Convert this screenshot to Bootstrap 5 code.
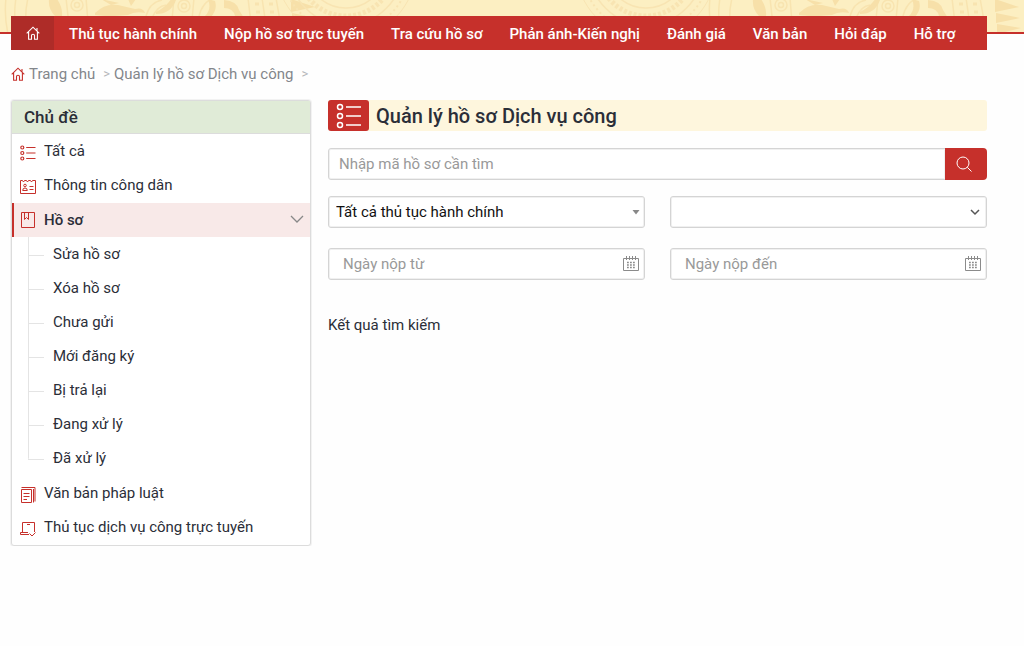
<!DOCTYPE html>
<html lang="vi">
<head>
<meta charset="utf-8">
<meta name="viewport" content="width=device-width, initial-scale=1">
<title>Quản lý hồ sơ Dịch vụ công</title>
<link href="https://cdn.jsdelivr.net/npm/bootstrap@5.3.0/dist/css/bootstrap.min.css" rel="stylesheet">
<style>
  :root { --brand: #c6302b; --line: #dcdcdc; --ink: #2b2e38; }
  body { font-family: Roboto, "Liberation Sans", sans-serif; font-size: 15px; line-height: 20px; color: var(--ink); background: #fefefe; }
  a { color: inherit; text-decoration: none; }
  svg { display: block; flex: none; }
  .page-gutter { padding-left: 11px; padding-right: 37px; }

  .banner-art { height: 34px; background: #fcefc2; border-bottom: 2px solid var(--brand); overflow: hidden; z-index: -1; }
  .banner-art svg { width: 100%; height: 32px; }
  .site-header { padding-top: 16px; z-index: 0; }
  .main-nav { background: var(--brand); color: #fff; min-height: 34px; font-weight: 500; }
  .home-link { background: #ae2c28; width: 43px; }
  .nav-items { padding: 8px 15px 6px; column-gap: 27px; }

  .crumbs { color: #83868b; padding-top: 14px; padding-bottom: 16px; }
  .crumb-sep { color: #b5b7ba; font-size: 13px; }

  .layout { display: grid; grid-template-columns: 300px minmax(0, 1fr); column-gap: 17px; align-items: start; }
  .topics { border: 1px solid var(--line); border-radius: 3px; box-shadow: 0 0 0 1px #f2f2f2; background: #fff; padding-bottom: 1px; }
  .topics h2 { margin: 0; padding: 6px 12px 5px; font-size: 17px; line-height: 21px; font-weight: 500; background: #e0ebd7; border-bottom: 1px solid var(--line); }
  .topic { height: 34px; padding-left: 8px; padding-right: 6px; column-gap: 8px; color: var(--ink); }
  .topic-open { background: #f8e9e8; border-left: 2px solid var(--brand); padding-left: 6px; font-weight: 500; margin-top: 1px; }
  .topic-icon { stroke: var(--brand); fill: none; }
  .subtopics { margin: 0 0 1px 16px; }
  .subtopics li { display: flex; align-items: center; height: 34px; column-gap: 9px;
    background: linear-gradient(#e4e4e4, #e4e4e4) 0 0 / 1px 100% no-repeat; }
  .subtopics li:last-child { background-size: 1px 52%; }
  .subtopics li::before { content: ""; width: 16px; height: 1px; background: #e4e4e4; margin-top: 2px; }
  .subtopics a { padding-bottom: 1px; }

  .page-title { background: #fef6dd; border-radius: 3px; column-gap: 7px; margin: 0 0 17px; font-size: 20px; line-height: 29px; padding-top: 0; font-weight: 500; }
  .page-title-text { padding-top: 2px; }
  .title-icon { width: 41px; height: 31px; background: var(--brand); border-radius: 3px; }
  .field { height: 32px; font-size: 15px; line-height: 20px; border: 1px solid #d4d4d4; border-radius: 3px; box-shadow: inset 0 0 0 1px #f0f0f0; padding: 5px 10px; background-color: #fff; color: #111; }
  .field::placeholder { color: #999; opacity: 1; }
  .search-row { margin-bottom: 16px; }
  .search-btn { width: 42px; height: 32px; padding: 0; background: var(--brand); border: 0; border-radius: 0 4px 4px 0; }
  .search-btn:hover { background: #ae2c28; }
  .filters { display: grid; grid-template-columns: 1fr 1fr; gap: 20px 25px; }
  .pick { padding: 5px 20px 5px 7px; background-size: 10px 10px; background-position: right 6px center; }
  .pick-solid { background-size: 8px 8px; background-position: right 4px center;
    background-image: url("data:image/svg+xml,%3Csvg xmlns='http://www.w3.org/2000/svg' viewBox='0 0 8 8'%3E%3Cpath d='M0.5 2h7L4 6.5z' fill='%23888'/%3E%3C/svg%3E"); }
  .pick-line { background-image: url("data:image/svg+xml,%3Csvg xmlns='http://www.w3.org/2000/svg' viewBox='0 0 10 10'%3E%3Cpath d='M1 3l4 4 4-4' fill='none' stroke='%23555' stroke-width='1.5'/%3E%3C/svg%3E"); }
  .date { padding-left: 14px; padding-right: 30px; }
  .date-icon { top: 8px; right: 6px; }
  .results { margin: 35px 0 0; font-size: 15px; line-height: 20px; font-weight: 400; }
</style>
</head>
<body>

<svg width="0" height="0" class="position-absolute" aria-hidden="true">
  <symbol id="i-home" viewBox="0 0 14 14"><path d="M.7 7.4L7 1.2l6.3 6.2M2.6 6v7.2h2.9V9.6Q5.500 8.200 7 8.200Q8.500 8.200 8.500 9.600V13.200h2.900V6M11 4.800V2" fill="none" stroke="currentColor" stroke-width="1.1"/></symbol>
  <symbol id="i-list" viewBox="0 0 16 16"><g fill="none" stroke="currentColor" stroke-width="1.200"><circle cx="2.300" cy="2.500" r="1.500"/><circle cx="2.300" cy="8" r="1.500"/><circle cx="2.300" cy="13.500" r="1.500"/><path d="M6.200 2.500H15.500M6.200 8H15.500M6.200 13.500H15.500"/></g></symbol>
  <symbol id="i-cal" viewBox="0 0 16 16"><g fill="none" stroke="#8b8b8b"><path d="M.5 2.500h15v12H.5zM3.500 0v4M6.500 0v4M9.500 0v4M12.500 0v4"/><path d="M4 6.500h9M4 9h9M4 11.500h9" stroke-width="1.400" stroke-dasharray="1.800 1.200"/></g></symbol>
  <!-- Bronze-drum bands: birds, warriors and the star rim -->
  <symbol id="drum" viewBox="0 0 340 32">
    <g fill="none" stroke="#f8e4b0" stroke-width="1.500">
      <path d="M6-2q-2 18 2 36M16-2q-3 18 1 36M28-2q-4 16-1 36M66-2l4 36M86-2l3 36M174-2l-2 22M194-2l-2 22M248-2l4 34M262-2l5 34M276-2l6 34"/>
      <circle cx="77" cy="5" r="6"/><circle cx="77" cy="5" r="2.500"/><circle cx="79" cy="24" r="6"/><circle cx="79" cy="24" r="2.500"/>
      <circle cx="184" cy="6" r="6"/><circle cx="184" cy="6" r="2.500"/><path d="M146 16q4-14 16-16M152 18q5-12 14-13M199 16q3-12 12-17"/>
      <path d="M255 4h4M256 12h4M257 20h4M258 28h4M269 4h4M270 12h4M271 20h4M272 28h4" stroke-width="3"/>
    </g>
    <g fill="#f7e0a9">
      <path d="M49-1h8q6 9 5 17l-4 16h-5l2-16q-7-7-6-17zM95 13q10-10 23-8l17 4q8-2 10 4-10-2-17 2l-13 1-8 6-2-6-10-1zM101-1l18 4-8 2zM128-1h8l-5 7zM156 12q10-5 16-14l4 2q-5 14-20 14zM208-1l7 2q3 9-5 17l-5-2q7-7 3-17zM224 0q13 1 15 10l5 8-9-2q-2-8-11-8z"/>
      <path d="M291-1l24 8-24 5zM292 13l24 5-24 5zM293 24l24 4-24 6z"/>
    </g>
  </symbol>
</svg>

<header class="site-header page-gutter position-relative">
  <div class="banner-art position-absolute top-0 start-0 w-100" aria-hidden="true">
    <svg viewBox="0 0 1024 32" preserveAspectRatio="xMidYMid slice">
      <use href="#drum" x="0" width="340" height="32"/>
      <g fill="none" stroke="#f8e4b2">
        <circle cx="346" cy="-32" r="64" stroke-width="2" stroke-dasharray="2 3"/>
        <circle cx="346" cy="-32" r="70" stroke-width="1"/><circle cx="346" cy="-32" r="57" stroke-width="1.500"/><circle cx="346" cy="-32" r="48" stroke-width="5" stroke-dasharray="3 2"/><circle cx="346" cy="-32" r="40" stroke-width="1.500"/>
        <circle cx="646" cy="-32" r="64" stroke-width="2" stroke-dasharray="2 3"/>
        <circle cx="646" cy="-32" r="70" stroke-width="1"/><circle cx="646" cy="-32" r="57" stroke-width="1.500"/><circle cx="646" cy="-32" r="48" stroke-width="5" stroke-dasharray="3 2"/><circle cx="646" cy="-32" r="40" stroke-width="1.500"/>
      </g>
      <use href="#drum" x="704" width="340" height="32"/>
    </svg>
  </div>
  <nav class="main-nav d-flex align-items-stretch" aria-label="Chính">
    <a href="#" class="home-link d-flex align-items-center justify-content-center flex-shrink-0" aria-label="Trang chủ"><svg width="14" height="14"><use href="#i-home"/></svg></a>
    <div class="nav-items d-flex flex-wrap">
      <a href="#">Thủ tục hành chính</a>
      <a href="#">Nộp hồ sơ trực tuyến</a>
      <a href="#">Tra cứu hồ sơ</a>
      <a href="#">Phản ánh-Kiến nghị</a>
      <a href="#">Đánh giá</a>
      <a href="#">Văn bản</a>
      <a href="#">Hỏi đáp</a>
      <a href="#">Hỗ trợ</a>
    </div>
  </nav>
</header>

<div class="page-gutter">
  <nav class="crumbs d-flex align-items-center" aria-label="Đường dẫn">
    <a href="#" class="d-flex align-items-center gap-1"><svg width="14" height="14" color="#c6302b"><use href="#i-home"/></svg>Trang chủ</a>
    <span class="crumb-sep ms-2 me-1">&gt;</span>
    <a href="#">Quản lý hồ sơ Dịch vụ công</a>
    <span class="crumb-sep ms-2">&gt;</span>
  </nav>

  <div class="layout">
    <aside class="topics">
      <h2>Chủ đề</h2>
      <a href="#" class="topic d-flex align-items-center"><svg class="mt-1" width="16" height="16" color="#c6302b"><use href="#i-list"/></svg>Tất cả</a>
      <a href="#" class="topic d-flex align-items-center">
        <svg class="topic-icon mt-1" width="16" height="16" viewBox="0 0 16 16"><path d="M.5 1.500h2l1 1.500 1-1.500h2l1 1.500 1-1.500h2l1 1.500 1-1.500h3v13H.5z"/><circle cx="5" cy="6.500" r="1.300"/><path d="M2.700 11.500q0-2.500 2.300-2.500t2.300 2.500zM9.500 7.500h4M9.500 10.500h4"/></svg>Thông tin công dân</a>
      <a href="#" class="topic topic-open d-flex align-items-center">
        <svg class="topic-icon" width="16" height="16" viewBox="0 0 16 16"><path d="M1.500 .5h13v15h-13zM4.500 .5v7l2-2 2 2v-7"/></svg>Hồ sơ
        <svg class="ms-auto" width="14" height="14" viewBox="0 0 14 14" fill="none" stroke="#888" stroke-width="1.300"><path d="M1 3l6 6 6-6"/></svg></a>
      <ul class="subtopics list-unstyled">
        <li><a href="#">Sửa hồ sơ</a></li>
        <li><a href="#">Xóa hồ sơ</a></li>
        <li><a href="#">Chưa gửi</a></li>
        <li><a href="#">Mới đăng ký</a></li>
        <li><a href="#">Bị trả lại</a></li>
        <li><a href="#">Đang xử lý</a></li>
        <li><a href="#">Đã xử lý</a></li>
      </ul>
      <a href="#" class="topic d-flex align-items-center">
        <svg class="topic-icon mt-1" width="16" height="16" viewBox="0 0 16 16"><path d="M1.500 2.500h10v13h-10zM1.500.5h13.500v14M13.500 2v13.500M3.500 6.500h6M3.500 9.500h6M3.500 12.500h3.500"/></svg>Văn bản pháp luật</a>
      <a href="#" class="topic d-flex align-items-center">
        <svg class="topic-icon mt-1" width="16" height="16" viewBox="0 0 16 16"><path d="M2.500 11V1.500h12V11M7 3.500h3M8 11.500H.5v2H9M9.500 12.500l2.500 2.500 3.500-3.500"/></svg>Thủ tục dịch vụ công trực tuyến</a>
    </aside>

    <main>
      <h1 class="page-title d-flex align-items-center">
        <span class="title-icon d-flex align-items-center justify-content-center text-white flex-shrink-0"><svg width="26" height="26" viewBox="0 0 26 26" fill="none" stroke="#fff" stroke-width="1.500"><circle cx="4" cy="4" r="2.500"/><circle cx="4" cy="13" r="2.500"/><circle cx="4" cy="22" r="2.500"/><path d="M10 4h15M10 13h15M10 22h15"/></svg></span>
        <span class="page-title-text">Quản lý hồ sơ Dịch vụ công</span>
      </h1>
      <form onsubmit="return false">
        <div class="search-row input-group flex-nowrap">
          <input type="text" class="form-control field" aria-label="Mã hồ sơ" placeholder="Nhập mã hồ sơ cần tìm">
          <button type="submit" class="btn search-btn d-flex align-items-center justify-content-center flex-shrink-0" aria-label="Tìm kiếm"><svg class="me-1" width="16" height="16" viewBox="0 0 16 16" fill="none" stroke="#fff"><circle cx="7" cy="7" r="6"/><path d="M11.300 11.300l4.200 4.200"/></svg></button>
        </div>
        <div class="filters">
          <select class="form-select field pick pick-solid" aria-label="Thủ tục"><option>Tất cả thủ tục hành chính</option></select>
          <select class="form-select field pick pick-line" aria-label="Trạng thái"><option></option></select>
          <div class="position-relative">
            <input type="text" class="form-control field date" aria-label="Ngày nộp từ" placeholder="Ngày nộp từ">
            <svg class="date-icon position-absolute" width="16" height="16"><use href="#i-cal"/></svg>
          </div>
          <div class="position-relative">
            <input type="text" class="form-control field date" aria-label="Ngày nộp đến" placeholder="Ngày nộp đến">
            <svg class="date-icon position-absolute" width="16" height="16"><use href="#i-cal"/></svg>
          </div>
        </div>
      </form>
      <h2 class="results">Kết quả tìm kiếm</h2>
    </main>
  </div>
</div>

<script src="https://cdn.jsdelivr.net/npm/bootstrap@5.3.0/dist/js/bootstrap.bundle.min.js"></script>
</body>
</html>
